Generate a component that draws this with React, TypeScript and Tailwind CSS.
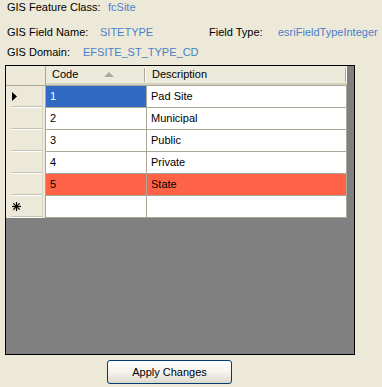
import React from 'react';

const rows = [
  { code: '1', desc: 'Pad Site', current: true },
  { code: '2', desc: 'Municipal' },
  { code: '3', desc: 'Public' },
  { code: '4', desc: 'Private' },
  { code: '5', desc: 'State', error: true },
];

function RowHeader({ children }: { children?: React.ReactNode }) {
  return (
    <div className="flex h-[22px] w-[40px] shrink-0 border-r border-[#ACA899] bg-[#ECE9D8]">
      <div className="flex w-[37px] flex-col border-r border-[#DAD6C8]">
        <div className="flex flex-1 items-center pl-[6px]">{children}</div>
        <div className="ml-[5px] h-[2px] w-[31px] border-t border-[#C5C1B2] bg-white" />
      </div>
    </div>
  );
}

function HeaderSep() {
  return <div className="ml-auto h-[14px] w-[2px] border-l border-[#ACA899] bg-white" />;
}

export default function App() {
  return (
    <div
      className="h-[387px] w-[382px] overflow-hidden whitespace-nowrap bg-[#ECE9D8] text-[11px] text-black"
      style={{ fontFamily: '"Liberation Sans", Arial, sans-serif' }}
    >
      <div className="pl-[7px] pt-[1px]">
        <div className="flex h-[13px] items-center">
          <span className="w-[101px]">GIS Feature Class:</span>
          <span className="text-[#4A80C8]">fcSite</span>
        </div>
        <div className="mt-[12px] flex h-[13px] items-center">
          <span className="w-[93px]">GIS Field Name:</span>
          <span className="w-[109px] text-[#4A80C8]">SITETYPE</span>
          <span className="w-[69px]">Field Type:</span>
          <span className="text-[#4A80C8]">esriFieldTypeInteger</span>
        </div>
        <div className="mt-[7px] flex h-[13px] items-center">
          <span className="w-[76px]">GIS Domain:</span>
          <span className="text-[#4A80C8]">EFSITE_ST_TYPE_CD</span>
        </div>
      </div>

      {/* data grid */}
      <div className="ml-[5px] mt-[6px] h-[290px] w-[350px] border border-black bg-[#808080]">
        <div className="flex h-[20px] w-[341px]">
          <div className="w-[40px] border-b border-r border-[#ACA899] bg-[#ECE9D8]" />
          <div className="flex w-[101px] flex-col border-b border-[#ACA899] bg-[#EBEADB]">
            <div className="flex h-[17px] items-center pl-[6px] pr-[1px]">
              <span>Code</span>
              <svg className="ml-auto mr-[5px]" width="10" height="5" viewBox="0 0 10 5">
                <polygon points="0,5 10,5 5,0" fill="#ACA899" />
              </svg>
              <HeaderSep />
            </div>
            <div className="h-[2px] bg-[#D6D2C2]" />
          </div>
          <div className="flex w-[200px] flex-col border-b border-[#ACA899] bg-[#EBEADB]">
            <div className="flex h-[17px] items-center pl-[5px]">
              <span>Description</span>
              <HeaderSep />
            </div>
            <div className="h-[2px] bg-[#D6D2C2]" />
          </div>
        </div>

        {rows.map((r) => (
          <div key={r.code} className="flex h-[22px] w-[341px]">
            <RowHeader>
              {r.current && (
                <svg width="5" height="9" viewBox="0 0 5 9">
                  <polygon points="0,0 5,4.5 0,9" fill="#000" />
                </svg>
              )}
            </RowHeader>
            <div
              className={`flex w-[101px] items-center border-b border-r border-[#ACA899] pl-[4px] ${
                r.current ? 'bg-[#316AC5] text-white' : r.error ? 'bg-[#FF6347]' : 'bg-white'
              }`}
            >
              {r.code}
            </div>
            <div
              className={`flex w-[200px] items-center border-b border-r border-[#ACA899] pl-[4px] ${
                r.error ? 'bg-[#FF6347]' : 'bg-white'
              }`}
            >
              {r.desc}
            </div>
          </div>
        ))}

        <div className="flex h-[22px] w-[341px]">
          <RowHeader>
            <svg width="9" height="9" viewBox="0 0 9 9" stroke="#000" strokeWidth="1.2">
              <line x1="4.5" y1="0" x2="4.5" y2="9" />
              <line x1="0" y1="4.5" x2="9" y2="4.5" />
              <line x1="1.3" y1="1.3" x2="7.7" y2="7.7" />
              <line x1="7.7" y1="1.3" x2="1.3" y2="7.7" />
            </svg>
          </RowHeader>
          <div className="w-[101px] border-b border-r border-[#ACA899] bg-white" />
          <div className="w-[200px] border-b border-r border-[#ACA899] bg-white" />
        </div>
      </div>

      <button className="ml-[107px] mt-[5px] flex h-[24px] w-[125px] items-center justify-center rounded-[3px] border border-[#003C74] bg-linear-to-b from-white via-[#F5F4EF] to-[#DCD8CB] text-[11px] text-black">
        Apply Changes
      </button>
    </div>
  );
}
